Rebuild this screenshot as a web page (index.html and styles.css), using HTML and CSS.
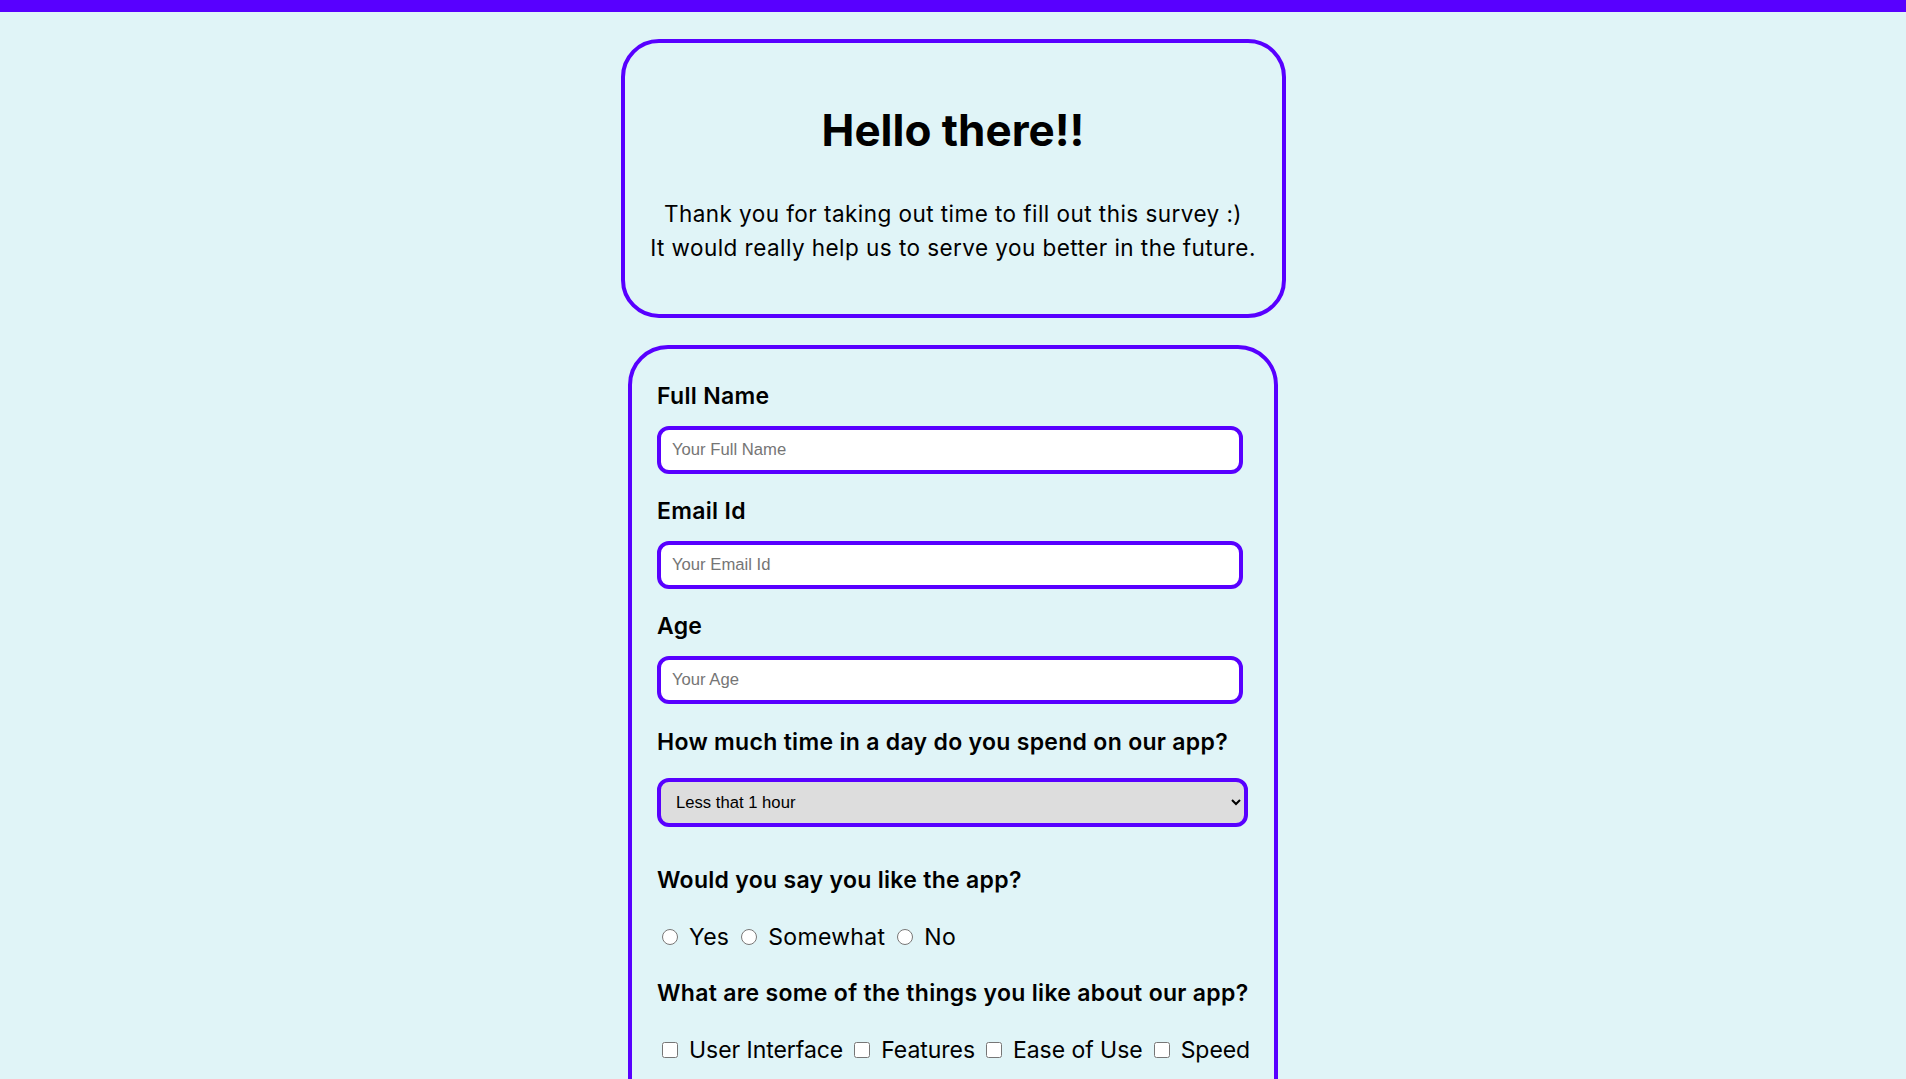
FILE: index.html
```html
<!DOCTYPE html>
<html lang="en">
<head>
<meta charset="utf-8">
<title>Survey Form</title>
<link rel="stylesheet" href="styles.css">
</head>
<body>
<header class="topbar"></header>
<main class="page">
  <section class="card intro">
    <h1 class="intro-title" id="title">Hello there!!</h1>
    <p class="intro-text" id="description">Thank you for taking out time to fill out this survey :)<br>It would really help us to serve you better in the future.</p>
  </section>

  <form class="card survey" id="survey-form">
    <div class="field">
      <label class="question" for="name" id="name-label">Full Name</label>
      <input class="text-input" type="text" id="name" placeholder="Your Full Name">
    </div>
    <div class="field">
      <label class="question" for="email" id="email-label">Email Id</label>
      <input class="text-input" type="email" id="email" placeholder="Your Email Id">
    </div>
    <div class="field field-age">
      <label class="question" for="number" id="number-label">Age</label>
      <input class="text-input" type="text" id="number" placeholder="Your Age">
    </div>
    <div class="field field-select">
      <label class="question" for="dropdown">How much time in a day do you spend on our app?</label>
      <select class="select-input" id="dropdown">
        <option>Less that 1 hour</option>
        <option>1 - 3 hours</option>
        <option>More than 3 hours</option>
      </select>
    </div>
    <div class="field field-choice">
      <p class="question">Would you say you like the app?</p>
      <div class="options">
        <label class="option"><input type="radio" name="like" value="yes">Yes</label>
        <label class="option"><input type="radio" name="like" value="somewhat">Somewhat</label>
        <label class="option"><input type="radio" name="like" value="no">No</label>
      </div>
    </div>
    <div class="field field-choice">
      <p class="question">What are some of the things you like about our app?</p>
      <div class="options options-check">
        <label class="option"><input type="checkbox" value="ui">User Interface</label>
        <label class="option"><input type="checkbox" value="features">Features</label>
        <label class="option"><input type="checkbox" value="ease">Ease of Use</label>
        <label class="option"><input type="checkbox" value="speed">Speed</label>
      </div>
    </div>
    <div class="field field-choice">
      <label class="question" for="comments">Any suggestions for us?</label>
      <textarea class="text-area" id="comments" placeholder="Your suggestions"></textarea>
    </div>
    <button class="submit" type="submit" id="submit">Submit</button>
  </form>
</main>
</body>
</html>
```
FILE: styles.css
```css
* {
  box-sizing: border-box;
}

body {
  margin: 0;
  background: #e0f4f7;
  color: #000;
  font-family: Inter, "Open Sans", sans-serif;
}

.topbar {
  height: 12px;
  background: #5800ff;
}

.page {
  display: flex;
  flex-direction: column;
  align-items: center;
  gap: 27px;
  padding: 27px 0 40px;
}

.card {
  border: 4px solid #5800ff;
  border-radius: 38px;
}

.intro {
  width: 665px;
  height: 279px;
  padding: 61px 10px 0;
  text-align: center;
}

.intro-title {
  margin: 0 0 40px;
  font-size: 44px;
  line-height: 53px;
  font-weight: 700;
  letter-spacing: 0;
}

.intro-text {
  margin: 0;
  font-size: 22.5px;
  line-height: 34px;
  font-weight: 400;
  letter-spacing: 0.45px;
}

.survey {
  width: 650px;
  padding: 33px 10px 40px 25px;
  border-radius: 40px;
}

.field {
  margin-bottom: 23px;
}

.field-age {
  margin-bottom: 24px;
}

.field-select {
  margin-bottom: 39px;
}

.field-choice {
  margin-bottom: 28px;
}

.question {
  display: block;
  margin: 0 0 16px;
  font-size: 23px;
  line-height: 28px;
  font-weight: 600;
  letter-spacing: 0.3px;
  white-space: nowrap;
}

.field-select .question {
  margin-bottom: 22px;
}

.field-choice .question {
  margin-bottom: 29px;
}

.text-input {
  display: block;
  width: 586px;
  height: 48px;
  padding: 0 11px;
  border: 4px solid #5800ff;
  border-radius: 12px;
  background: #fff;
  font-family: "Liberation Sans", Arial, sans-serif;
  font-size: 16.67px;
  color: #000;
}

.text-input::placeholder,
.text-area::placeholder {
  color: #757575;
}

.select-input {
  display: block;
  width: 591px;
  height: 49px;
  padding: 0 8px 0 11px;
  border: 4px solid #5800ff;
  border-radius: 12px;
  background-color: #dddddd;
  font-family: "Liberation Sans", Arial, sans-serif;
  font-size: 16.67px;
  color: #000;
}

.options {
  display: flex;
  align-items: center;
  gap: 7px;
  height: 28px;
  white-space: nowrap;
}

.option {
  display: inline-flex;
  flex-shrink: 0;
  align-items: center;
  font-size: 23px;
  line-height: 28px;
  font-weight: 400;
  letter-spacing: 0.3px;
}

.options-check {
  gap: 6px;
}

.options-check .option {
  letter-spacing: -0.05px;
}

.option input {
  flex-shrink: 0;
  width: 16px;
  height: 16px;
  margin: 0 11px 0 5px;
}

.text-area {
  display: block;
  width: 586px;
  height: 120px;
  padding: 11px;
  border: 4px solid #5800ff;
  border-radius: 12px;
  font-family: "Liberation Sans", Arial, sans-serif;
  font-size: 16.67px;
  resize: none;
}

.submit {
  display: block;
  margin: 0 auto;
  padding: 12px 40px;
  border: 4px solid #5800ff;
  border-radius: 12px;
  background: #5800ff;
  color: #fff;
  font-family: Inter, sans-serif;
  font-size: 20px;
  font-weight: 600;
}
```
